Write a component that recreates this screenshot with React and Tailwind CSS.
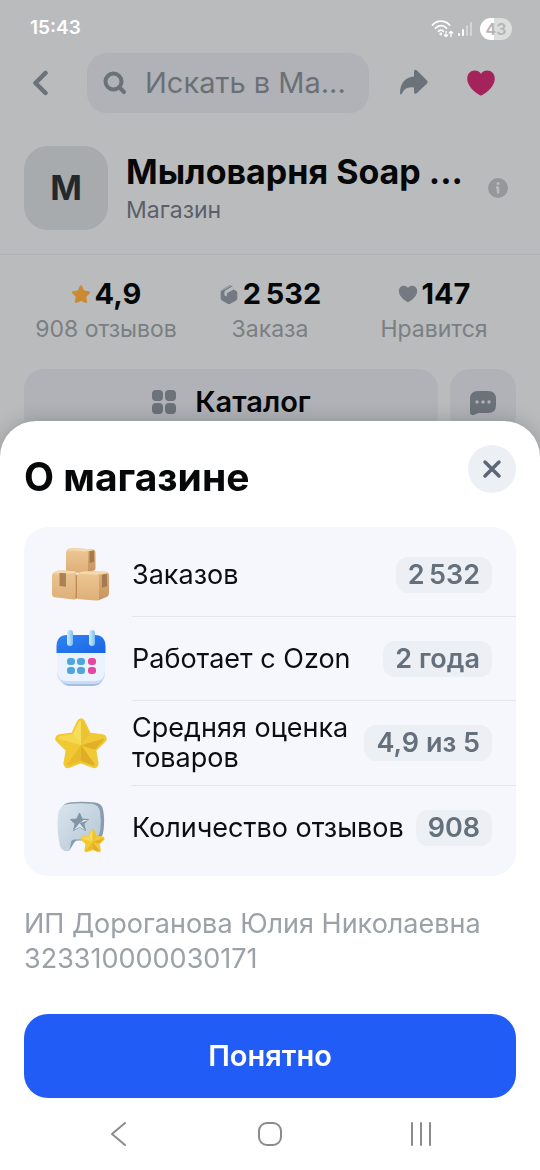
import React, { useState } from 'react';

const stats = [
  { icon: 'star', value: '4,9', label: '908 отзывов' },
  { icon: 'box', value: '2\u2009532', label: 'Заказа' },
  { icon: 'heart', value: '147', label: 'Нравится' },
];

const facts = [
  { icon: 'boxes', label: 'Заказов', value: '2\u2009532' },
  { icon: 'calendar', label: 'Работает с Ozon', value: '2 года' },
  { icon: 'star', label: 'Средняя оценка товаров', value: '4,9 из 5' },
  { icon: 'review', label: 'Количество отзывов', value: '908' },
];

const STAR = 'M12 1.5c.6 0 1 .4 1.3 1l2.5 5.3 5.8.8c1.3.2 1.8 1.6.9 2.5l-4.2 4.1 1 5.8c.2 1.2-1 2.100-2.100 1.500L12 20.500l-5.200 2c-1.100.600-2.300-.300-2.100-1.500l1-5.800-4.200-4.100c-.900-.900-.400-2.300.900-2.500l5.800-.800 2.500-5.300c.300-.600.700-1 1.300-1z';
const HEART = 'M12 22c-1 0-11-6-11-13.500C1 4.500 3.800 2 7 2c2 0 3.700.9 5 2.500C13.300 2.900 15 2 17 2c3.200 0 6 2.500 6 6.500C23 16 13 22 12 22z';

const StatusIcons = () => (
  <div className="flex items-center gap-1">
    <svg className="w-[23px] h-[20px]" viewBox="0 0 23 20" fill="none" stroke="#fff" strokeWidth="1.800" strokeLinecap="round">
      <path d="M1.500 6C6 .8 14 .8 18.500 6" />
      <path d="M4.500 9.200C7.500 5.700 12.500 5.700 15.500 9.200" />
      <path d="M7.500 12.300c1.500-1.600 3.300-1.600 4.800 0" />
      <circle cx="9.800" cy="15" r=".5" />
      <path strokeWidth="1.300" d="M15 12.500v5M13.300 16l1.700 1.700 1.700-1.700M20 17.500v-5M18.300 14l1.700-1.700 1.700 1.700" />
    </svg>
    <svg className="w-[14px] h-[16px]" viewBox="0 0 14 16" fill="#fff">
      <rect x="0" y="12" width="2" height="3" rx="1" />
      <rect x="4" y="8" width="2" height="7" rx="1" />
      <rect x="8" y="4" width="2" height="11" rx="1" opacity=".4" />
      <rect x="12" y="1" width="2" height="14" rx="1" opacity=".4" />
    </svg>
    <span className="ml-1 flex h-[22px] w-[32px] items-center justify-center rounded-full bg-linear-to-r from-white from-43% to-[#dcdddd] to-43% text-base font-semibold text-[#b3b5b6]">
      43
    </span>
  </div>
);

const StatIcon = ({ name }) => {
  if (name === 'star') {
    return (
      <svg className="size-5" viewBox="0 0 24 24" fill="#c98a32"><path d={STAR} /></svg>
    );
  }
  if (name === 'heart') {
    return (
      <svg className="size-5" viewBox="0 0 24 24" fill="#737a82"><path d={HEART} /></svg>
    );
  }
  return (
    <svg className="size-5" viewBox="0 0 24 24" fill="#737a82">
      <path d="M2 7.500 12.500 1.600q1.300-.5 2.500.2l1.500.9L8 7.600Q6.500 8.500 6.500 10v3.500l3 1.500v-4l8-4.500 3 1.700q1.500.9 1.500 2.600v6.400q0 1.700-1.500 2.600l-7 4q-1.500.8-3 0l-7-4Q2 18.800 2 17z" />
      <path d="M1.500 8.500 17 .5" stroke="#b8bbbd" strokeWidth="1" />
      <path d="M8 13.500V11q0-1.500 1.200-2.200L13 6.600" fill="none" stroke="#b8bbbd" strokeWidth="2" />
    </svg>
  );
};

const BoxesPicture = () => (
  <svg className="size-[60px]" viewBox="0 0 60 60">
    <defs>
      <linearGradient id="carton" x1="0" y1="0" x2="0" y2="1">
        <stop offset="0" stopColor="#ecc693" />
        <stop offset="1" stopColor="#deaf78" />
      </linearGradient>
      <linearGradient id="cartonSide" x1="0" y1="0" x2="0" y2="1">
        <stop offset="0" stopColor="#dcae76" />
        <stop offset="1" stopColor="#c9955f" />
      </linearGradient>
    </defs>
    <path d="M16 5q2-2 5-1.800l20 1q3.500.2 3.500 3.300V23q0 2.500-3 3L35 27.500H19z" fill="url(#cartonSide)" />
    <path d="M15 7.500Q15 5 18 5l16 .7q3 .2 3 3V27.500H18q-3-.3-3-3z" fill="url(#carton)" />
    <path d="M16.500 5.500Q18 3.200 21 3.300l20 1q1.500.1 2 1l-7.500 1.200z" fill="#f5d9ae" />
    <path d="M38.500 6.300l4.500-.8V17l-4.500 1z" fill="#a57a52" />
    <path d="M1 31q0-3 3-4.200l3-1q2-.5 4-.4l12 .8q2.500.3 2.500 2.500v25q-1 1-3 .8L4 52.300q-3-.4-3-3.500z" fill="url(#carton)" />
    <path d="M2 28.500q1.500-1.700 4-2.500t5-.6l12 .8q1.500.2 2 1.500l-3 .8z" fill="#f5d9ae" />
    <path d="M8.500 28l6.500.3v13.500L8.500 41z" fill="#ad8056" />
    <path d="M28 28q2-2 5-1.800l21 .6q4 .3 4 3.700V48q0 3-2.500 4L47 55.500z" fill="url(#cartonSide)" />
    <path d="M25.500 31.500q0-3 3-3l16.500.4q3 .2 3 3v22q-1 1.800-3 1.600l-16.500-1.200q-3-.4-3-3z" fill="url(#carton)" />
    <path d="M27 28.700q2.500-2.600 6-2.500l21 .6q2 .1 3 1.500l-10.500 1.500z" fill="#f5d9ae" />
    <path d="M51 29.800l5-1v12.500l-5 1.500z" fill="#a57a52" />
    <path d="M25.300 30v23.500" stroke="#b9854f" strokeWidth="1.200" />
  </svg>
);

const CalendarPicture = () => (
  <svg className="size-[60px]" viewBox="0 0 60 60">
    <defs>
      <linearGradient id="calTop" x1="0" y1="0" x2="1" y2="1">
        <stop offset="0" stopColor="#2f86f3" />
        <stop offset="1" stopColor="#1a64e6" />
      </linearGradient>
      <linearGradient id="calRing" x1="0" y1="0" x2="1" y2="0">
        <stop offset="0" stopColor="#d7efff" />
        <stop offset="1" stopColor="#79bdf3" />
      </linearGradient>
    </defs>
    <rect x="8" y="14" width="45" height="43" rx="11" fill="#a3bdea" />
    <rect x="6" y="10" width="48" height="45" rx="11" fill="#c9dbf5" />
    <path d="M6 24h48v18q0 10-10 10H16Q6 52 6 42z" fill="#ebf3ff" />
    <path d="M5.500 24v-6Q5.500 6 16 6h28q10.500 0 10.500 12v6z" fill="url(#calTop)" />
    <rect x="16" y="1" width="6" height="16" rx="3" fill="url(#calRing)" />
    <rect x="38" y="1" width="6" height="16" rx="3" fill="url(#calRing)" />
    {[29, 38].map((y) => (
      <g key={y}>
        <rect x="16" y={y} width="8" height="7" rx="3" fill="#50a5df" />
        <rect x="26" y={y} width="8" height="7" rx="3" fill="#50a5df" />
        <rect x="37" y={y} width="8" height="7" rx="3" fill="#ea459e" />
      </g>
    ))}
  </svg>
);

const GoldStar = () => (
  <g strokeLinejoin="round">
    <path d={STAR} fill="#f1c935" stroke="#f1c935" strokeWidth="1" />
    <path d="M12 13V2q-.7 0-1.200 1L8.300 8.200z" fill="#f7dd5c" />
    <path d="M12 13V2q.7 0 1.200 1l2.500 5.200z" fill="#eec331" />
    <path d="M12 13 8.300 8.200l-5.800.8q-.8.300-.7 1z" fill="#f6d84f" />
    <path d="M12 13l10.200-3q-.2 1-.7 1.500L18 15z" fill="#e2b026" />
    <path d="M12 13l6.300 8.500q-.5.700-1.500.3L12 20z" fill="#dfae26" />
    <path d="M12 13v7l-4.800 1.800q-1 .4-1.500-.3z" fill="#e9bb2b" />
  </g>
);

const StarPicture = () => (
  <svg className="size-[60px]" viewBox="0 0 60 60">
    <g transform="translate(3 2) scale(2.250)"><GoldStar /></g>
  </svg>
);

const ReviewPicture = () => (
  <svg className="size-[60px]" viewBox="0 0 60 60">
    <defs>
      <linearGradient id="bubble" x1="0" y1="0" x2="1" y2="1">
        <stop offset="0" stopColor="#d9e5ee" />
        <stop offset="1" stopColor="#b3c5d4" />
      </linearGradient>
    </defs>
    <path d="M12 8q2-3 8-3.700 12-1 24 .2 7 1 8 7 2 9 .5 21-1 9-8 10H27q-3 0-5 4l-3 5q-2 2.500-6 1z" fill="#8a9caf" />
    <path d="M7 17Q8 7 17 6q12-1.500 24-.3 7 1 8 8 1.500 9 .3 18-1 9-8 9.500l-18 .3q-3 0-3.500 3.500l-1 6q-1 3-5 2-4-1.500-5-6Q5.500 32 7 17z" fill="url(#bubble)" />
    <path d="m28.500 15 2.600 6 6.400.500-4.700 4.300 1.700 6.700-6-3.500-6 3.500 1.700-6.700-4.700-4.300 6.400-.5z" fill="#8295a7" stroke="#8295a7" strokeLinejoin="round" />
    <path d="M28.500 25l5.500 7-5.500-3-5.500 3zM29 25l3.500-3 5 .3z" fill="#dce6ee" />
    <g transform="translate(29 30) scale(1.050)"><GoldStar /></g>
  </svg>
);

const pictures = {
  boxes: BoxesPicture,
  calendar: CalendarPicture,
  star: StarPicture,
  review: ReviewPicture,
};

const StorePage = () => {
  const [query, setQuery] = useState('');

  return (
    <main className="min-h-screen bg-[#b9bbbd]">
      <div className="flex h-[53px] items-center justify-between pt-1 pr-7 pl-[30px]">
        <span className="text-[19px] font-semibold text-white">15:43</span>
        <StatusIcons />
      </div>

      <header className="flex h-[60px] items-center pr-11 pl-8">
        <button type="button" aria-label="Назад" className="mr-[38px]">
          <svg className="h-[26px] w-[17px]" viewBox="0 0 17 26" fill="none" stroke="#6b7279" strokeWidth="4.500" strokeLinecap="round" strokeLinejoin="round">
            <path d="M13.500 3 3.500 13l10 10" />
          </svg>
        </button>
        <label className="flex h-full min-w-0 flex-1 items-center gap-[18px] rounded-[20px] bg-[#b0b2b7] pr-3 pl-4">
          <svg className="size-6 shrink-0" viewBox="0 0 24 24" fill="none" stroke="#6b7279" strokeWidth="4" strokeLinecap="round">
            <circle cx="10.500" cy="10.500" r="8" />
            <path d="m16.500 16.500 4.500 4.500" />
          </svg>
          <input
            type="text"
            value={query}
            onChange={(e) => setQuery(e.target.value)}
            placeholder="Искать в Ма..."
            aria-label="Искать в магазине"
            className="w-full min-w-0 bg-transparent text-[29px] text-[#6b7075] outline-none placeholder:text-[#6b7075]"
          />
        </label>
        <button type="button" aria-label="Поделиться" className="ml-[30px]">
          <svg className="size-[30px]" viewBox="0 0 30 30" fill="#6b7279">
            <path d="M15 4q0-3.500 3-1.500L28 12.500q1.500 1.500 0 3L18 25q-3 2-3-1.500V19.500C9 18.500 5 20.500 3 25.500Q1 28 1 24.500 1.500 10 15 8.500z" />
          </svg>
        </button>
        <button type="button" aria-label="В избранное" className="ml-[37px]">
          <svg className="size-[30px]" viewBox="0 0 24 24" fill="#a5235b"><path d={HEART} /></svg>
        </button>
      </header>

      <section className="flex h-[142px] items-center border-b border-[#b0b2b5] pt-2 pr-[31px] pl-6">
        <div className="flex size-[84px] shrink-0 items-center justify-center rounded-3xl bg-[#a7abae] text-[34px] font-bold text-[#23282c]">
          М
        </div>
        <div className="ml-[18px] min-w-0 flex-1 whitespace-nowrap">
          <h1 className="text-[34px] leading-[44px] font-bold text-[#060708]">Мыловарня Soap ...</h1>
          <p className="text-[23px] leading-8 text-[#5b5f6a]">Магазин</p>
        </div>
        <button type="button" aria-label="О магазине" className="shrink-0">
          <svg className="size-[22px]" viewBox="0 0 22 22">
            <circle cx="11" cy="11" r="10" fill="#94989b" />
            <circle cx="11" cy="6.500" r="1.500" fill="#b9bbbd" />
            <path d="M10 10.500h1v5" fill="none" stroke="#b9bbbd" strokeWidth="2.500" strokeLinecap="round" strokeLinejoin="round" />
          </svg>
        </button>
      </section>

      <ul className="grid grid-cols-3 px-6 pt-5 pb-6 text-center whitespace-nowrap">
        {stats.map((s) => (
          <li key={s.label}>
            <div className="flex h-[38px] items-center justify-center gap-1 text-[29px] font-bold text-[#060708]">
              <StatIcon name={s.icon} />
              {s.value}
            </div>
            <div className="text-[23px] leading-8 text-[#7a7f83]">{s.label}</div>
          </li>
        ))}
      </ul>

      <div className="flex gap-3 px-6">
        <button type="button" className="flex h-[66px] flex-1 items-center justify-center gap-[18px] rounded-[20px] bg-[#b0b2b7] text-[29px] font-semibold text-[#060708]">
          <svg className="size-[26px]" viewBox="0 0 26 26" fill="#6b7279">
            <rect x="1" y="1" width="11" height="11" rx="4" />
            <rect x="14" y="1" width="11" height="11" rx="4" />
            <rect x="1" y="14" width="11" height="11" rx="4" />
            <rect x="14" y="14" width="11" height="11" rx="4" />
          </svg>
          Каталог
        </button>
        <button type="button" aria-label="Чат" className="flex size-[66px] items-center justify-center rounded-[20px] bg-[#b0b2b7]">
          <svg className="size-7" viewBox="0 0 28 28">
            <path d="M1 11q0-8 8-8h10q8 0 8 8v6q0 8-8 8h-9q-2 0-4 1.500-5 2-5-3z" fill="#6b7279" />
            <g fill="#b0b2b7">
              <circle cx="8" cy="14" r="1.700" />
              <circle cx="14" cy="14" r="1.700" />
              <circle cx="20" cy="14" r="1.700" />
            </g>
          </svg>
        </button>
      </div>
    </main>
  );
};

const AboutSheet = () => (
  <div
    role="dialog"
    aria-labelledby="about-title"
    className="fixed inset-x-0 bottom-0 rounded-t-[36px] bg-white px-6 pt-6 shadow-[0_0_20px_rgba(0,0,0,0.2)]"
  >
    <div className="flex h-[82px] items-start justify-between">
      <h2 id="about-title" className="pt-2 text-[39px] leading-12 font-bold text-[#070809]">О магазине</h2>
      <button type="button" aria-label="Закрыть" className="flex size-12 items-center justify-center rounded-full bg-[#ecf0f5]">
        <svg className="size-5" viewBox="0 0 20 20" stroke="#5c6875" strokeWidth="3.500" strokeLinecap="round">
          <path d="m3 3 14 14M17 3 3 17" />
        </svg>
      </button>
    </div>

    <dl className="rounded-3xl bg-[#f5f7fc] py-1.5 pl-[27px]">
      {facts.map((fact, i) => {
        const Picture = pictures[fact.icon];
        return (
          <div key={fact.label} className="flex items-center gap-[21px]">
            <Picture />
            <div className={`flex min-h-[84px] min-w-0 flex-1 items-center justify-between gap-2 py-3 pr-6 ${i < facts.length - 1 ? 'border-b border-[#e2e5eb]' : ''}`}>
              <dt className="text-[27px] leading-[30px] text-[#0c0e11]">{fact.label}</dt>
              <dd className="shrink-0 rounded-xl bg-[#ecf0f5] px-3 text-[27px] leading-9 font-semibold text-[#65707d]">{fact.value}</dd>
            </div>
          </div>
        );
      })}
    </dl>

    <p className="mt-[30px] text-[27px] leading-[35px] text-[#9ba1a7]">
      ИП Дороганова Юлия Николаевна
      <br />
      323310000030171
    </p>

    <button type="button" className="mt-[38px] h-[84px] w-full rounded-3xl bg-[#225cf6] text-[29px] font-semibold text-white">
      Понятно
    </button>

    <nav className="flex h-[72px] items-center justify-around px-5">
      <button type="button" aria-label="Назад">
        <svg className="size-7" viewBox="0 0 28 28" fill="none" stroke="#8b8b8b" strokeWidth="2" strokeLinecap="round" strokeLinejoin="round">
          <path d="M20 3 7 14l13 11" />
        </svg>
      </button>
      <button type="button" aria-label="Домой">
        <svg className="size-7" viewBox="0 0 28 28" fill="none" stroke="#8b8b8b" strokeWidth="2">
          <rect x="3" y="3" width="22" height="22" rx="8" />
        </svg>
      </button>
      <button type="button" aria-label="Недавние">
        <svg className="size-7" viewBox="0 0 28 28" stroke="#8b8b8b" strokeWidth="2" strokeLinecap="round">
          <path d="M5 3v22M14 3v22M23 3v22" />
        </svg>
      </button>
    </nav>
  </div>
);

const App = () => (
  <div className="font-[Inter,'Noto_Sans',sans-serif]">
    <StorePage />
    <AboutSheet />
  </div>
);

export default App;
